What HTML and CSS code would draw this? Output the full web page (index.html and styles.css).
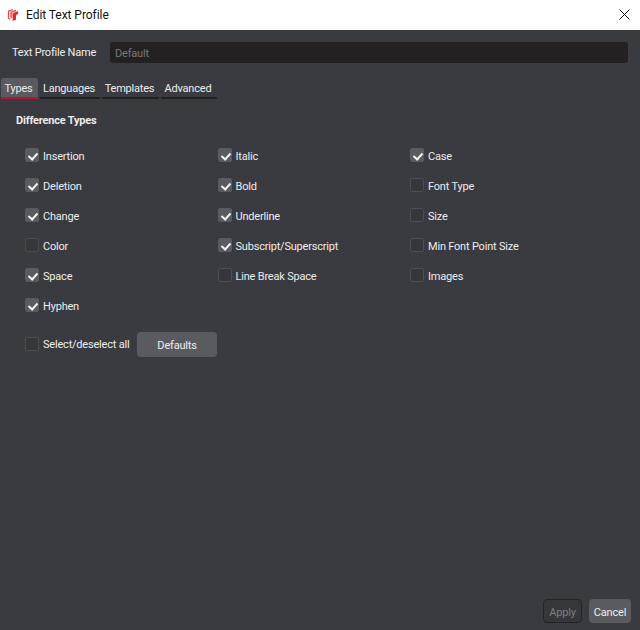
FILE: index.html
```html
<!DOCTYPE html>
<html lang="en">
<head>
<meta charset="utf-8">
<title>Edit Text Profile</title>
<link rel="stylesheet" href="styles.css">
</head>
<body>
<div class="dialog">
  <header class="titlebar">
    <svg class="logo" width="12" height="15" viewBox="0 0 14 16"><path d="M1 3.5 7 1.5V3L2.5 4.6V12L4 13V14.5L1 12.5Z" fill="#e0434a"/><path d="M4 5 10.5 2.5V4L5.5 6V12.5L4 11.5Z" fill="#d8323a"/><path d="M6.5 6.5 13 4V7.5L10.5 8.5V14L6.5 15.5Z" fill="#e8262e"/></svg>
    <span class="title">Edit Text Profile</span>
    <svg class="close" width="11" height="11" viewBox="0 0 11 11"><path d="M.5.5 10.5 10.5M10.5.5.5 10.5" stroke="#111" stroke-width="1" fill="none"/></svg>
  </header>
  <main class="body">
    <div class="name-row">
      <label class="name-label">Text Profile Name</label>
      <div class="name-input">Default</div>
    </div>
    <nav class="tabs">
      <span class="tab active">Types</span>
      <span class="tab">Languages</span>
      <span class="tab">Templates</span>
      <span class="tab">Advanced</span>
    </nav>
    <h2 class="section">Difference Types</h2>
    <div class="grid">
      <div class="opt on"><i class="box"></i>Insertion</div>
      <div class="opt on"><i class="box"></i>Italic</div>
      <div class="opt on"><i class="box"></i>Case</div>
      <div class="opt on"><i class="box"></i>Deletion</div>
      <div class="opt on"><i class="box"></i>Bold</div>
      <div class="opt"><i class="box"></i>Font Type</div>
      <div class="opt on"><i class="box"></i>Change</div>
      <div class="opt on"><i class="box"></i>Underline</div>
      <div class="opt"><i class="box"></i>Size</div>
      <div class="opt"><i class="box"></i>Color</div>
      <div class="opt on"><i class="box"></i>Subscript/Superscript</div>
      <div class="opt"><i class="box"></i>Min Font Point Size</div>
      <div class="opt on"><i class="box"></i>Space</div>
      <div class="opt"><i class="box"></i>Line Break Space</div>
      <div class="opt"><i class="box"></i>Images</div>
      <div class="opt on"><i class="box"></i>Hyphen</div>
    </div>
    <div class="select-row">
      <div class="opt"><i class="box"></i>Select/deselect all</div>
      <button class="btn defaults">Defaults</button>
    </div>
    <footer class="footer">
      <button class="btn apply">Apply</button>
      <button class="btn cancel">Cancel</button>
    </footer>
  </main>
</div>
</body>
</html>
```
FILE: styles.css
```css
* { box-sizing: border-box; }
html, body { margin: 0; height: 100%; }
body { font-family: Roboto, "Noto Sans", sans-serif; font-size: 11px; letter-spacing: -0.2px; color: #ececec; background: #3a3b40; overflow: hidden; }
.dialog { display: flex; flex-direction: column; height: 630px; }
.titlebar { display: flex; align-items: center; height: 30px; flex: none; background: #fff; color: #111; padding: 0 10px 1px 7px; }
.logo { flex: none; }
.title { margin-left: 7px; font-size: 12px; letter-spacing: -0.05px; flex: 1; }
.close { flex: none; }
.body { flex: 1; display: flex; flex-direction: column; min-height: 0; padding: 0 9px 7px 0; }
.name-row { display: flex; align-items: center; height: 21px; margin: 12px 3px 0 0; padding-left: 12px; line-height: 23px; }
.name-label { width: 98px; flex: none; }
.name-input { flex: 1; height: 21px; line-height: 23px; padding-left: 5px; background: #242122; border-radius: 3px; color: #77787a; }
.tabs { display: flex; gap: 2px; margin-top: 15px; padding-left: 1px; }
.tab { display: block; height: 21px; line-height: 22px; padding-right: 2px; text-align: center; border-bottom: 2px solid #232325; border-radius: 3px 3px 0 0; }
.tab.active { background: #5a5b61; border-bottom-color: #b81530; width: 37px; }
.tab:nth-child(2) { width: 60px; }
.tab:nth-child(3) { width: 57px; }
.tab:nth-child(4) { width: 56px; }
.section { margin: 13px 0 0 16px; font-size: 11px; font-weight: 700; line-height: 18px; }
.grid { display: grid; grid-template-columns: repeat(3, 192.5px); grid-auto-rows: 30px; margin: 11px 0 0 25px; }
.opt { display: flex; align-items: center; gap: 4px; height: 30px; white-space: nowrap; }
.box { position: relative; display: block; width: 14px; height: 14px; margin-bottom: 2px; flex: none; background: #36373b; border: 1px solid #4c4d52; border-radius: 2px; }
.on .box { background: #5a5b60; border-color: #5a5b60; }
.on .box::after { content: ""; position: absolute; left: 4px; top: 2px; width: 4px; height: 7px; border: solid #f2f2f2; border-width: 0 2px 2px 0; transform: rotate(42deg); }
.select-row { display: flex; align-items: center; margin: 11px 0 0 25px; height: 25px; }
.select-row .opt { width: 112px; }
.btn { font: inherit; letter-spacing: inherit; border: 0; border-radius: 4px; padding: 2px 0 0; color: #eee; background: #5a5b60; }
.defaults { width: 80px; height: 25px; }
.footer { display: flex; justify-content: flex-end; gap: 7px; margin-top: auto; }
.apply { width: 39px; height: 24px; background: #36373b; border: 1px solid #242426; color: #7e7f80; }
.cancel { width: 42px; height: 24px; }
```
